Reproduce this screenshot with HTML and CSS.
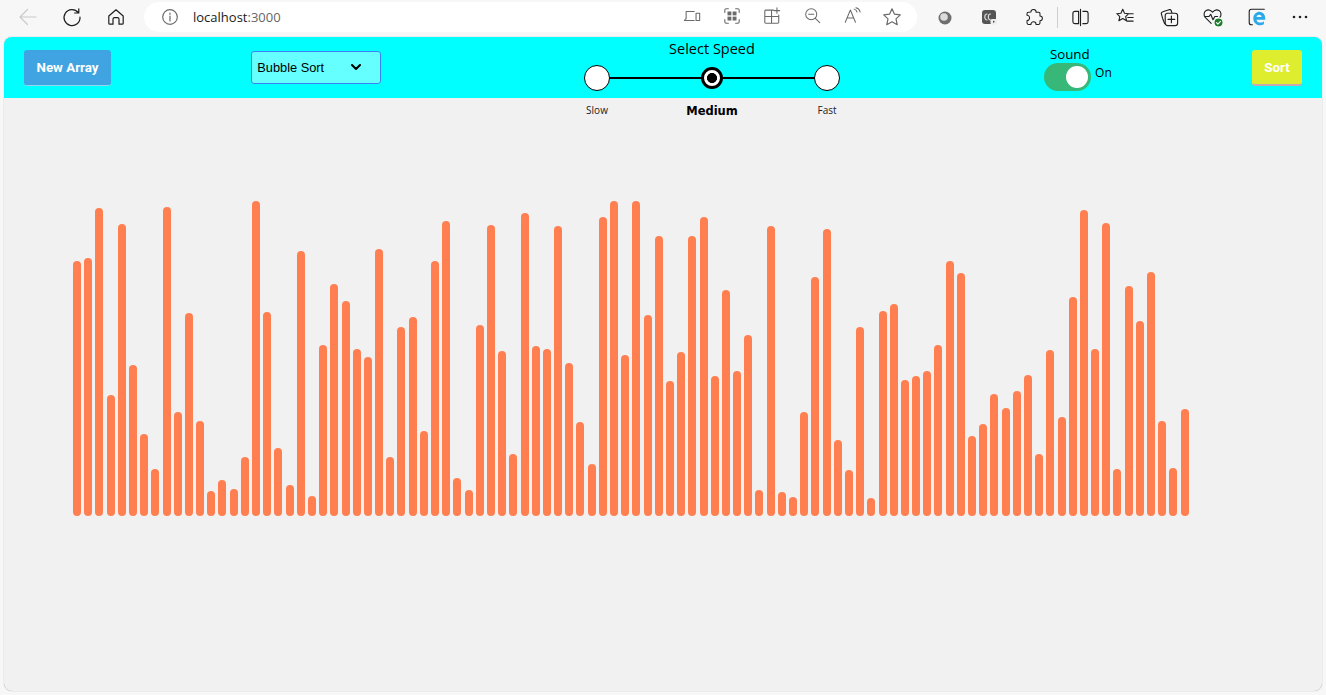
FILE: index.html
```html
<!DOCTYPE html>
<html lang="en">
<head>
    <meta charset="UTF-8">
    <meta name="viewport" content="width=device-width, initial-scale=1.0">
    <title>Sorting Visualizer</title>
    <link rel="stylesheet" href="styles.css">
</head>
<body>
    <div class="browser-bar">
        <div class="nav-slot faded">
            <svg width="20" height="20" viewBox="0 0 20 20"><path d="M18 10H2M9.500 2.500L2 10l7.500 7.500"/></svg>
        </div>
        <div class="nav-slot">
            <svg width="20" height="20" viewBox="0 0 20 20"><path d="M16.200 5.500A8 8 0 1 0 18 10M16.800 1.800v4.200h-4.200"/></svg>
        </div>
        <div class="nav-slot">
            <svg width="20" height="20" viewBox="0 0 20 20"><path d="M2.800 9L10 2.800 17.200 9v7.200a1 1 0 0 1-1 1H13v-5a1.500 1.500 0 0 0-1.500-1.500h-3A1.500 1.500 0 0 0 7 12.200v5H3.800a1 1 0 0 1-1-1z"/></svg>
        </div>
        <div class="address">
            <svg class="info" width="18" height="18" viewBox="0 0 18 18"><circle cx="9" cy="9" r="7.300"/><path d="M9 8v5M9 5v1.300"/></svg>
            <span class="url">localhost<span class="port">:3000</span></span>
            <div class="address-icons">
                <div class="addr-slot">
                    <svg width="18" height="18" viewBox="0 0 20 20"><path d="M3.500 13V5h9M1.500 15h11M14.500 7h4v8h-4zM3 13l-1.500 2"/></svg>
                </div>
                <div class="addr-slot">
                    <svg width="18" height="18" viewBox="0 0 20 20"><path d="M2 6V3.500A1.500 1.500 0 0 1 3.500 2H6M14 2h2.500A1.500 1.500 0 0 1 18 3.500V6M18 14v2.500a1.500 1.500 0 0 1-1.500 1.500H14M6 18H3.500A1.500 1.500 0 0 1 2 16.500V14"/><rect class="solid" x="5" y="5" width="4.300" height="4.300"/><rect class="solid" x="10.700" y="5" width="4.300" height="4.300"/><rect class="solid" x="5" y="10.700" width="4.300" height="4.300"/><rect class="solid" x="10.700" y="10.700" width="4.300" height="4.300"/></svg>
                </div>
                <div class="addr-slot">
                    <svg width="18" height="18" viewBox="0 0 20 20"><path d="M12 3.500H3A1.200 1.200 0 0 0 2 4.700V17a1 1 0 0 0 1 1h13.500a1 1 0 0 0 1-1V9M2 10.500h15.500M9.500 3.500V18M15.500 1v6M12.500 4h6"/></svg>
                </div>
                <div class="addr-slot">
                    <svg width="17" height="17" viewBox="0 0 20 20"><circle cx="8.500" cy="8.500" r="6.500"/><path d="M5.500 8.500h6M13.300 13.300L18.500 18.500"/></svg>
                </div>
                <div class="addr-slot">
                    <svg width="17" height="17" viewBox="0 0 20 20"><path d="M1.500 18L7.500 3.500 13.500 18M3.500 13h8M12 2.500c2 .5 3 1.800 3.300 3.500M14 .8c3 .7 4.500 2.800 5 5"/></svg>
                </div>
                <div class="addr-slot">
                    <svg width="20" height="20" viewBox="0 0 20 20"><path d="M10 1.800l2.500 5.400 5.800.7-4.300 4 1.200 5.800L10 14.800l-5.200 2.900L6 11.900l-4.300-4 5.800-.7z"/></svg>
                </div>
            </div>
        </div>
        <div class="tool-slot">
            <svg width="20" height="20" viewBox="0 0 20 20"><circle class="ball" cx="10" cy="11" r="6.500"/><circle class="ball-light" cx="9" cy="10" r="3.800"/></svg>
        </div>
        <div class="tool-slot">
            <svg width="22" height="22" viewBox="0 0 22 22"><rect class="ext-box" x="4" y="4" width="14" height="14" rx="3"/><path class="ext-line" d="M9 8a2.200 3 0 1 0 0 6M12.500 8a2.200 3 0 1 0 0 6"/><rect class="ext-play" x="12.500" y="13" width="6.500" height="5.500" rx="1.500"/><path class="ext-tri" d="M15 14.500l2 1.200-2 1.200z"/></svg>
        </div>
        <div class="tool-slot">
            <svg width="19" height="19" viewBox="0 0 22 22"><path d="M8 4.500a3 3 0 0 1 6 0.500h3a1.500 1.500 0 0 1 1.500 1.500v2.700a2.800 2.800 0 0 1 0 5.600v2.700a1.500 1.500 0 0 1-1.500 1.500h-3a3 3 0 0 0-6 0H5a1.500 1.500 0 0 1-1.500-1.500v-3a3 3 0 0 0 0-6V6.500A1.500 1.500 0 0 1 5 5z"/></svg>
        </div>
        <div class="divider"></div>
        <div class="tool-slot">
            <svg width="19" height="19" viewBox="0 0 20 20"><path d="M8 3.500H4A2 2 0 0 0 2 5.500v9a2 2 0 0 0 2 2h4zM10 1.500v17M12.500 3.500H16a2 2 0 0 1 2 2v9a2 2 0 0 1-2 2h-3.500"/></svg>
        </div>
        <div class="tool-slot">
            <svg width="20" height="20" viewBox="0 0 22 22"><path d="M8.500 2.500l2 4.300 4.500.6-3.300 3.100 1 4.600-4.200-2.400-4.200 2.400 1-4.600L2 7.400l4.500-.6zM15 7.500h5M14 11.500h6M13 15.500h7"/></svg>
        </div>
        <div class="tool-slot">
            <svg width="21" height="21" viewBox="0 0 22 22"><path d="M6 17.500L4 12.500 2.500 7.500A2 2 0 0 1 4 5l6.500-2.200c1-.3 2 .2 2.300 1L13.500 6"/><rect x="6.500" y="6.500" width="13" height="13" rx="2.500"/><path d="M13 9.500v7M9.500 13h7"/></svg>
        </div>
        <div class="tool-slot">
            <svg width="22" height="22" viewBox="0 0 24 24"><path d="M10 19L3.500 12.500C1.500 10 2 6.500 4.500 5c2.500-1.500 5-.5 7 1.800 2-2.300 4.500-3.300 7-1.800 2.500 1.500 3 5 1 7.500M3 11.500h4.500L9.500 9l2.500 6 2-3.500h3"/><circle class="health" cx="18" cy="18" r="5"/><path class="health-tick" d="M15.800 18.200l1.500 1.500 2.900-3"/></svg>
        </div>
        <div class="tool-slot">
            <svg width="22" height="22" viewBox="0 0 24 24"><path d="M20 3.500H6A2.500 2.500 0 0 0 3.500 6v12A2.500 2.500 0 0 0 6 20.500h1"/><path class="ie" d="M21 15h-9.500c.2 3 4.500 4.500 8 1.500v3.500c-5 2.500-11.500 0-11.500-6.500 0-6 6-8.500 9.500-6.500 3 1.500 3.700 4.500 3.500 8zM11.500 12h5.500c0-3.300-5-3.300-5.500 0z"/></svg>
        </div>
        <div class="tool-slot">
            <svg width="20" height="20" viewBox="0 0 20 20"><circle class="dot" cx="4" cy="10" r="1.300"/><circle class="dot" cx="10" cy="10" r="1.300"/><circle class="dot" cx="16" cy="10" r="1.300"/></svg>
        </div>
    </div>

    <div class="app">
        <header class="app-header">
            <button class="btn btn-new">New Array</button>
            <div class="algo-select">
                <span>Bubble Sort</span>
                <svg width="10" height="7" viewBox="0 0 10 7"><path d="M1 1l4 4 4-4"/></svg>
            </div>
            <div class="speed">
                <div class="speed-title">Select Speed</div>
                <div class="speed-track">
                    <div class="speed-stop">
                        <div class="speed-dot"></div>
                        <div class="speed-label">Slow</div>
                    </div>
                    <div class="speed-stop">
                        <div class="speed-dot active"></div>
                        <div class="speed-label current">Medium</div>
                    </div>
                    <div class="speed-stop">
                        <div class="speed-dot"></div>
                        <div class="speed-label">Fast</div>
                    </div>
                </div>
            </div>
            <div class="sound">
                <div class="sound-title">Sound</div>
                <div class="sound-row">
                    <div class="toggle"><div class="knob"></div></div>
                    <span class="sound-state">On</span>
                </div>
            </div>
            <button class="btn btn-sort">Sort</button>
        </header>
        <main class="bars">
            <div class="bar" style="height:255px"></div><div class="bar" style="height:258px"></div><div class="bar" style="height:308px"></div><div class="bar" style="height:121px"></div><div class="bar" style="height:292px"></div>
            <div class="bar" style="height:151px"></div><div class="bar" style="height:82px"></div><div class="bar" style="height:47px"></div><div class="bar" style="height:309px"></div><div class="bar" style="height:104px"></div>
            <div class="bar" style="height:203px"></div><div class="bar" style="height:95px"></div><div class="bar" style="height:25px"></div><div class="bar" style="height:36px"></div><div class="bar" style="height:27px"></div>
            <div class="bar" style="height:59px"></div><div class="bar" style="height:315px"></div><div class="bar" style="height:204px"></div><div class="bar" style="height:68px"></div><div class="bar" style="height:31px"></div>
            <div class="bar" style="height:265px"></div><div class="bar" style="height:20px"></div><div class="bar" style="height:171px"></div><div class="bar" style="height:232px"></div><div class="bar" style="height:215px"></div>
            <div class="bar" style="height:167px"></div><div class="bar" style="height:159px"></div><div class="bar" style="height:267px"></div><div class="bar" style="height:59px"></div><div class="bar" style="height:189px"></div>
            <div class="bar" style="height:199px"></div><div class="bar" style="height:85px"></div><div class="bar" style="height:255px"></div><div class="bar" style="height:295px"></div><div class="bar" style="height:38px"></div>
            <div class="bar" style="height:26px"></div><div class="bar" style="height:191px"></div><div class="bar" style="height:291px"></div><div class="bar" style="height:165px"></div><div class="bar" style="height:62px"></div>
            <div class="bar" style="height:303px"></div><div class="bar" style="height:170px"></div><div class="bar" style="height:167px"></div><div class="bar" style="height:290px"></div><div class="bar" style="height:153px"></div>
            <div class="bar" style="height:94px"></div><div class="bar" style="height:52px"></div><div class="bar" style="height:299px"></div><div class="bar" style="height:315px"></div><div class="bar" style="height:161px"></div>
            <div class="bar" style="height:315px"></div><div class="bar" style="height:201px"></div><div class="bar" style="height:280px"></div><div class="bar" style="height:135px"></div><div class="bar" style="height:164px"></div>
            <div class="bar" style="height:280px"></div><div class="bar" style="height:299px"></div><div class="bar" style="height:140px"></div><div class="bar" style="height:226px"></div><div class="bar" style="height:145px"></div>
            <div class="bar" style="height:181px"></div><div class="bar" style="height:26px"></div><div class="bar" style="height:290px"></div><div class="bar" style="height:24px"></div><div class="bar" style="height:19px"></div>
            <div class="bar" style="height:104px"></div><div class="bar" style="height:239px"></div><div class="bar" style="height:287px"></div><div class="bar" style="height:76px"></div><div class="bar" style="height:46px"></div>
            <div class="bar" style="height:189px"></div><div class="bar" style="height:18px"></div><div class="bar" style="height:205px"></div><div class="bar" style="height:212px"></div><div class="bar" style="height:136px"></div>
            <div class="bar" style="height:140px"></div><div class="bar" style="height:145px"></div><div class="bar" style="height:171px"></div><div class="bar" style="height:255px"></div><div class="bar" style="height:243px"></div>
            <div class="bar" style="height:80px"></div><div class="bar" style="height:92px"></div><div class="bar" style="height:122px"></div><div class="bar" style="height:108px"></div><div class="bar" style="height:125px"></div>
            <div class="bar" style="height:141px"></div><div class="bar" style="height:62px"></div><div class="bar" style="height:166px"></div><div class="bar" style="height:99px"></div><div class="bar" style="height:219px"></div>
            <div class="bar" style="height:306px"></div><div class="bar" style="height:167px"></div><div class="bar" style="height:293px"></div><div class="bar" style="height:47px"></div><div class="bar" style="height:230px"></div>
            <div class="bar" style="height:195px"></div><div class="bar" style="height:244px"></div><div class="bar" style="height:95px"></div><div class="bar" style="height:48px"></div><div class="bar" style="height:107px"></div>
        </main>
    </div>
</body>
</html>
```

FILE: styles.css
```css
* {
    box-sizing: border-box;
}
html, body {
    height: 100%;
}
body {
    margin: 0;
    display: flex;
    flex-direction: column;
    overflow: hidden;
    background: #f7f7f7;
    font-family: 'Open Sans', sans-serif;
    color: #000;
}
svg {
    display: block;
    fill: none;
    stroke: #1f1f1f;
    stroke-width: 1.2;
    stroke-linecap: round;
    stroke-linejoin: round;
}

/* browser toolbar */
.browser-bar {
    flex: none;
    height: 37px;
    display: flex;
    align-items: center;
    padding: 0 0 3px 6px;
}
.nav-slot {
    width: 44px;
    flex: none;
    display: flex;
    justify-content: center;
}
.nav-slot.faded svg {
    stroke: #c9c9c9;
}
.address {
    width: 773px;
    height: 30px;
    flex: none;
    margin: 0 6px;
    padding: 0 5px 0 17px;
    display: flex;
    align-items: center;
    background: #fff;
    border-radius: 15px;
}
.info {
    stroke: #6b6b6b;
}
.url {
    margin-left: 14px;
    font-size: 13px;
    color: #1a1a1a;
}
.port {
    color: #666;
}
.address-icons {
    margin-left: auto;
    display: flex;
}
.addr-slot {
    width: 40px;
    display: flex;
    justify-content: center;
}
.addr-slot svg {
    stroke: #6a6a6a;
}
.addr-slot .solid {
    fill: #6a6a6a;
    stroke: none;
}
.tool-slot {
    width: 44.2px;
    flex: none;
    display: flex;
    justify-content: center;
}
.tool-slot:last-child {
    width: 41px;
}
.divider {
    width: 1px;
    height: 21px;
    flex: none;
    margin: 0 1px;
    background: #cfcfcf;
}
.ball {
    fill: #6f6f6f;
    stroke: none;
}
.ball-light {
    fill: #dcdcdc;
    stroke: none;
}
.ext-box {
    fill: #555;
    stroke: none;
}
.ext-line {
    stroke: #ddd;
}
.ext-play {
    fill: #eee;
    stroke: none;
}
.ext-tri {
    fill: #555;
    stroke: none;
}
.health {
    fill: #1c7d2c;
    stroke: #fff;
}
.health-tick {
    stroke: #fff;
}
.ie {
    fill: #29a8ea;
    stroke: none;
}
.dot {
    fill: #222;
    stroke: none;
}

/* app window */
.app {
    flex: 1;
    margin: 0 4px 4px;
    display: flex;
    flex-direction: column;
    overflow: hidden;
    background: #f1f1f1;
    border-radius: 8px;
    box-shadow: 0 0 1px rgba(0, 0, 0, 0.45);
}
.app-header {
    flex: none;
    height: 61px;
    padding: 0 20px;
    display: flex;
    justify-content: space-between;
    align-items: flex-start;
    background: #00ffff;
}
.btn {
    height: 36px;
    margin-top: 13px;
    border: none;
    border-radius: 3px;
    font-family: 'Roboto', sans-serif;
    font-size: 13.33px;
    font-weight: 700;
    color: #fff;
}
.btn-new {
    width: 87px;
    background: #40a4e2;
    border-bottom: 1px solid #8fd6ee;
}
.btn-sort {
    width: 50px;
    background: #deee2e;
    border-bottom: 2px solid #c9a9b0;
}
.algo-select {
    width: 130px;
    height: 33px;
    margin-top: 14px;
    padding: 0 19px 0 5px;
    display: flex;
    justify-content: space-between;
    align-items: center;
    background: #66ffff;
    border: 1px solid #3b82f6;
    border-radius: 3px;
    font-family: 'Liberation Sans', sans-serif;
    font-size: 12.8px;
}
.algo-select svg {
    stroke: #000;
    stroke-width: 2;
}

/* speed picker */
.speed {
    width: 382px;
    padding: 0 63.5px 0 62.5px;
    display: flex;
    flex-direction: column;
    align-items: center;
}
.speed-title {
    height: 22px;
    padding-top: 2px;
    font-size: 14.5px;
    line-height: 19px;
}
.speed-track {
    width: 100%;
    display: flex;
    justify-content: space-between;
    background: linear-gradient(#000, #000) center 18px / 90% 2px no-repeat;
}
.speed-stop {
    width: 26px;
    display: flex;
    flex-direction: column;
    align-items: center;
    white-space: nowrap;
}
.speed-dot {
    width: 26px;
    height: 26px;
    margin-top: 6px;
    flex: none;
    background: #fff;
    border: 1px solid #000;
    border-radius: 50%;
}
.speed-dot.active {
    width: 22px;
    height: 22px;
    margin: 8px 2px 2px;
    background: radial-gradient(circle, #000 0, #000 4.7px, #fff 5.3px);
    border: 3px solid #000;
}
.speed-label {
    margin-top: 13px;
    font-size: 10px;
    line-height: 12px;
    color: #222;
}
.speed-label.current {
    margin-top: 14px;
    font-family: 'DejaVu Sans', sans-serif;
    font-size: 11.5px;
    font-weight: 700;
    color: #000;
}

/* sound switch */
.sound {
    width: 68px;
    padding-top: 8px;
}
.sound-title {
    width: 52px;
    font-size: 13.3px;
    line-height: 18px;
    text-align: center;
}
.sound-row {
    display: flex;
    align-items: flex-start;
}
.toggle {
    width: 48px;
    height: 28px;
    padding: 3px;
    display: flex;
    justify-content: flex-end;
    background: #38b878;
    border-radius: 14px;
}
.knob {
    width: 22px;
    height: 22px;
    background: #fff;
    border-radius: 50%;
}
.sound-state {
    margin-left: 4px;
    padding-top: 1px;
    font-size: 12px;
    line-height: 18px;
}

/* array bars */
.bars {
    flex: none;
    height: 418px;
    padding: 103px 0 0 69px;
    display: flex;
    align-items: flex-end;
    gap: 3.19px;
}
.bar {
    width: 8px;
    flex: none;
    background: #ff7f50;
    border-radius: 4px;
}
```
